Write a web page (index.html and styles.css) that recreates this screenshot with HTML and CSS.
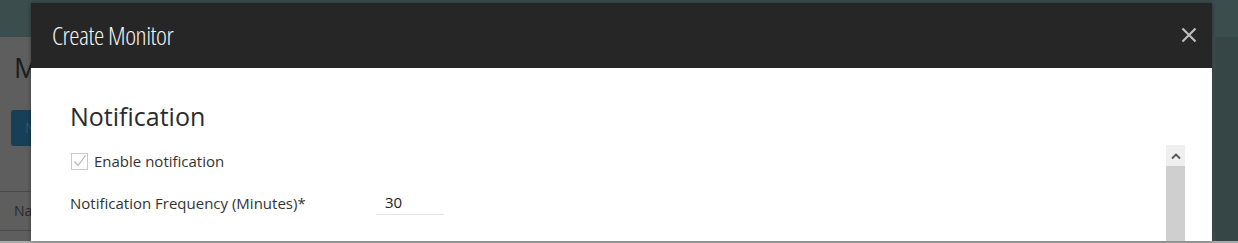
FILE: index.html
```
<!DOCTYPE html>
<html>
<head>
<meta charset="utf-8">
<link rel="stylesheet" href="styles.css">
</head>
<body>
<div class="page">
  <div class="page-top"></div>
  <div class="page-main">
    <div class="page-left">
      <div class="bg-title">Monitors</div>
      <div class="bg-btn">New</div>
      <div class="bg-row">Name</div>
    </div>
    <div class="page-right"></div>
  </div>
  <div class="page-foot"></div>
</div>

<div class="modal">
  <div class="modal-head">
    <div class="modal-title">Create Monitor</div>
    <div class="modal-close">
      <svg width="16" height="16" viewBox="0 0 16 16"><path d="M1.5 1.5 L14.5 14.5 M14.5 1.5 L1.5 14.5" stroke="#bdbdbd" stroke-width="2.2" fill="none"/></svg>
    </div>
  </div>
  <div class="modal-body">
    <div class="content">
      <h2 class="section">Notification</h2>
      <label class="check-row">
        <span class="check">
          <svg width="17" height="17" viewBox="0 0 17 17"><rect x="0.5" y="0.5" width="16" height="16" fill="#fff" stroke="#cacaca"/><path d="M3.5 8.5 L7 12.5 L14.5 2.5" stroke="#b8b8b8" stroke-width="1.2" fill="none"/></svg>
        </span>
        <span class="check-label">Enable notification</span>
      </label>
      <div class="field-row">
        <span class="field-label">Notification Frequency (Minutes)*</span>
        <span class="field-input">30</span>
      </div>
    </div>
    <div class="scrollbar">
      <div class="sb-arrow">
        <svg width="12" height="8" viewBox="0 0 12 8"><path d="M2 6.5 L6 2.5 L10 6.5" stroke="#555" stroke-width="1.8" fill="none"/></svg>
      </div>
      <div class="sb-thumb"></div>
    </div>
  </div>
</div>
</body>
</html>
```
FILE: styles.css
```
html, body {
  margin: 0;
  padding: 0;
  width: 1238px;
  height: 243px;
  overflow: hidden;
  font-family: "Open Sans", "Noto Sans", sans-serif;
}
.page {
  width: 1238px;
  height: 243px;
  display: flex;
  flex-direction: column;
  background: #5d5f5f;
}
.page-top {
  height: 37px;
  background: #3c4d4d;
}
.page-main {
  flex: 1;
  display: flex;
}
.page-left {
  flex: 1;
  background: #5e5e5e;
  padding: 16px 0 0 14px;
  display: flex;
  flex-direction: column;
}
.bg-title {
  font-size: 27px;
  color: #1c1c1c;
  line-height: 30px;
}
.bg-btn {
  margin-top: 27px;
  width: 80px;
  height: 36px;
  background: #173f57;
  border-radius: 3px;
  color: #2a5874;
  margin-left: -3px;
  line-height: 36px;
  padding-left: 14px;
  font-size: 14px;
}
.bg-row {
  margin-top: 45px;
  margin-left: -14px;
  border-top: 1px solid #4a4a4a;
  border-bottom: 1px solid #4a4a4a;
  height: 38px;
  line-height: 38px;
  padding-left: 14px;
  font-size: 14px;
  color: #2a2a2a;
}
.page-right {
  width: 26px;
  background: #364646;
  border-left: 3px solid #404f4f;
  box-sizing: border-box;
}
.page-foot {
  height: 2px;
  background: #a8aaaa;
}

.modal {
  position: absolute;
  left: 31px;
  top: 3px;
  width: 1181px;
  height: 238px;
  display: flex;
  flex-direction: column;
  box-shadow: 0 0 4px rgba(0,0,0,0.4);
}
.modal-head {
  height: 65px;
  background: #262626;
  display: flex;
  align-items: center;
  justify-content: space-between;
  padding: 0 15px 0 21px;
  flex-shrink: 0;
}
.modal-title {
  font-family: "Open Sans", sans-serif;
  font-stretch: 75%;
  font-weight: 300;
  font-size: 26px;
  color: #f2f2f2;
  letter-spacing: -0.5px;
  margin-top: -2px;
}
.modal-close {
  width: 16px;
  height: 16px;
  margin-top: -1px;
}
.modal-close svg { display: block; }
.modal-body {
  flex: 1;
  background: #fff;
  display: flex;
  position: relative;
}
.content {
  flex: 1;
  padding: 30px 0 0 39px;
}
.section {
  margin: 0;
  font-size: 25px;
  font-weight: 400;
  color: #2b2b2b;
  line-height: 36px;
}
.check-row {
  display: flex;
  align-items: center;
  margin-top: 16px;
  height: 22px;
}
.check {
  width: 17px;
  height: 17px;
  margin-left: 1px;
}
.check svg { display: block; }
.check-label {
  margin-left: 6px;
  font-size: 15px;
  color: #333;
}
.field-row {
  display: flex;
  align-items: center;
  margin-top: 18px;
}
.field-label {
  width: 306px;
  font-size: 15px;
  color: #333;
}
.field-input {
  width: 59px;
  padding-left: 9px;
  font-size: 15px;
  color: #222;
  border-bottom: 1px solid #e2e2e2;
  line-height: 24px;
}
.scrollbar {
  width: 19px;
  margin-top: 77px;
  margin-right: 27px;
  display: flex;
  flex-direction: column;
}
.sb-arrow {
  height: 21px;
  background: #efefef;
  display: flex;
  align-items: center;
  justify-content: center;
}
.sb-arrow svg { display: block; }
.sb-thumb {
  flex: 1;
  background: #cfcfcf;
}
```
